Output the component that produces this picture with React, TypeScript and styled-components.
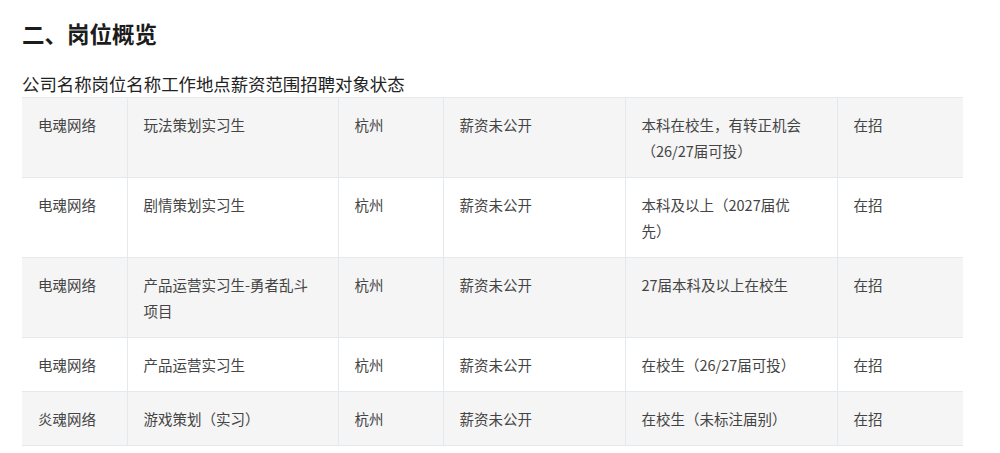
import React from 'react';
import styled, { createGlobalStyle } from 'styled-components';

const GlobalStyle = createGlobalStyle`
  html, body {
    margin: 0;
    padding: 0;
    background: #ffffff;
  }
  body {
    font-family: 'Noto Sans CJK SC', 'Noto Sans', sans-serif;
    color: #333333;
  }
`;

const Page = styled.div`
  padding: 17px 22px 0 22px;
`;

const Title = styled.h2`
  margin: 0 0 22px 0;
  font-size: 22.5px;
  line-height: 32px;
  font-weight: 700;
  color: #1c1c1c;
`;

const Caption = styled.div`
  font-size: 17.4px;
  line-height: 26px;
  color: #222222;
`;

const Table = styled.table`
  width: 941px;
  border-collapse: collapse;
  table-layout: fixed;
`;

const Row = styled.tr<{ $striped: boolean }>`
  background: ${(p) => (p.$striped ? '#f5f5f5' : '#ffffff')};
  border-top: 1px solid #e3eaef;
  border-bottom: 1px solid #e3eaef;
`;

const Cell = styled.td`
  padding: 14px 16px 13px 16px;
  font-size: 14.5px;
  line-height: 26px;
  color: #444444;
  vertical-align: top;
  white-space: pre-line;
  border-left: 1px solid #e3eaef;
  &:first-child {
    border-left: none;
  }
`;

const columns = [105, 211, 105, 182, 212, 126];

type Job = {
  company: string;
  title: string;
  city: string;
  salary: string;
  target: string;
  status: string;
};

const jobs: Job[] = [
  {
    company: '电魂网络',
    title: '玩法策划实习生',
    city: '杭州',
    salary: '薪资未公开',
    target: '本科在校生，有转正机会（26/27届可投）',
    status: '在招',
  },
  {
    company: '电魂网络',
    title: '剧情策划实习生',
    city: '杭州',
    salary: '薪资未公开',
    target: '本科及以上（2027届优\n先）',
    status: '在招',
  },
  {
    company: '电魂网络',
    title: '产品运营实习生-勇者乱斗项目',
    city: '杭州',
    salary: '薪资未公开',
    target: '27届本科及以上在校生',
    status: '在招',
  },
  {
    company: '电魂网络',
    title: '产品运营实习生',
    city: '杭州',
    salary: '薪资未公开',
    target: '在校生（26/27届可投）',
    status: '在招',
  },
  {
    company: '炎魂网络',
    title: '游戏策划（实习）',
    city: '杭州',
    salary: '薪资未公开',
    target: '在校生（未标注届别）',
    status: '在招',
  },
];

const App: React.FC = () => {
  return (
    <Page>
      <GlobalStyle />
      <Title>二、岗位概览</Title>
      <Caption>公司名称岗位名称工作地点薪资范围招聘对象状态</Caption>
      <Table>
        <colgroup>
          {columns.map((w, i) => (
            <col key={i} style={{ width: w }} />
          ))}
        </colgroup>
        <tbody>
          {jobs.map((job, index) => (
            <Row key={index} $striped={index % 2 === 0}>
              <Cell>{job.company}</Cell>
              <Cell>{job.title}</Cell>
              <Cell>{job.city}</Cell>
              <Cell>{job.salary}</Cell>
              <Cell>{job.target}</Cell>
              <Cell>{job.status}</Cell>
            </Row>
          ))}
        </tbody>
      </Table>
    </Page>
  );
};

export default App;
